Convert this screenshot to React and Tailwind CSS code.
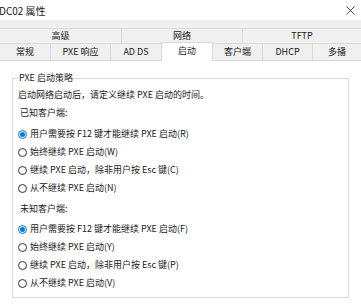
const font = { fontFamily: '"Noto Sans CJK SC", "Noto Sans", sans-serif' };

const topTabs = [
  { label: '高级', w: 'w-[121px]' },
  { label: '网络', w: 'w-[121px]' },
  { label: 'TFTP', w: 'flex-1' },
];

const tabs = [
  { label: '常规', w: 'w-[50px]' },
  { label: 'PXE 响应', w: 'w-[60px]' },
  { label: 'AD DS', w: 'w-[51px]' },
  { label: '启动', w: 'w-[52px]', active: true },
  { label: '客户端', w: 'w-[49px]' },
  { label: 'DHCP', w: 'w-[50px]' },
  { label: '多播', w: 'flex-1' },
];

const Radio = ({ checked, label }) => (
  <div className="flex h-[18px] items-center gap-[3px]">
    <span
      className={
        'flex h-[9px] w-[9px] shrink-0 items-center justify-center rounded-full border ' +
        (checked ? 'border-[#0078d7]' : 'border-[#333333]')
      }
    >
      {checked && <span className="h-[5px] w-[5px] rounded-full bg-[#0078d7]" />}
    </span>
    <span>{label}</span>
  </div>
);

export default function App() {
  return (
    <div className="h-[305px] w-[361px] overflow-hidden bg-white text-[9px] text-[#1a1a1a]" style={font}>
      <div className="flex h-[20px] items-center justify-between pr-[3px]">
        <span className="text-[10px] -ml-[1px]">DC02 属性</span>
        <svg width="9" height="9" viewBox="0 0 9 9" className="mr-[3px]">
          <path d="M0.5 0.5 L8.5 8.5 M8.5 0.5 L0.5 8.5" stroke="#333" strokeWidth="0.9" fill="none" />
        </svg>
      </div>

      <div className="bg-[#f0f0f0] pt-[8px]">
        <div className="flex h-[15px] border-t border-[#dadada]">
          {topTabs.map((t, i) => (
            <div
              key={t.label}
              className={'flex items-center justify-center border-[#dadada] ' + t.w + (i > 0 ? ' border-l' : '')}
            >
              {t.label}
            </div>
          ))}
        </div>
        <div className="flex h-[17px] border-t border-[#dadada]">
          {tabs.map((t, i) => (
            <div
              key={t.label}
              className={
                t.active
                  ? 'relative z-10 -mt-[2px] flex h-[19px] items-center justify-center border border-b-0 border-[#dadada] bg-white pb-[2px] ' + t.w
                  : 'flex items-center justify-center border-[#dadada] ' + t.w + (i > 0 && !tabs[i - 1].active ? ' border-l' : '')
              }
            >
              {t.label}
            </div>
          ))}
        </div>
      </div>

      <div className="border-t border-[#dadada] bg-white px-[12px] pt-[11px]">
        <fieldset className="border border-[#dcdcdc] pb-[5px] pl-[5px]">
          <legend className="px-[1px] leading-[12px]">PXE 启动策略</legend>
          <div className="flex h-[22px] items-center">启动网络启动后，请定义继续 PXE 启动的时间。</div>
          <div className="flex h-[14px] items-center pl-[2px]">已知客户端:</div>
          <div className="mt-[5px]">
            <Radio checked label="用户需要按 F12 键才能继续 PXE 启动(R)" />
            <Radio label="始终继续 PXE 启动(W)" />
            <Radio label="继续 PXE 启动，除非用户按 Esc 键(C)" />
            <Radio label="从不继续 PXE 启动(N)" />
          </div>
          <div className="mt-[3px] flex h-[18px] items-center pl-[2px]">未知客户端:</div>
          <div className="mt-[2px]">
            <Radio checked label="用户需要按 F12 键才能继续 PXE 启动(F)" />
            <Radio label="始终继续 PXE 启动(Y)" />
            <Radio label="继续 PXE 启动，除非用户按 Esc 键(P)" />
            <Radio label="从不继续 PXE 启动(V)" />
          </div>
        </fieldset>
      </div>
    </div>
  );
}
